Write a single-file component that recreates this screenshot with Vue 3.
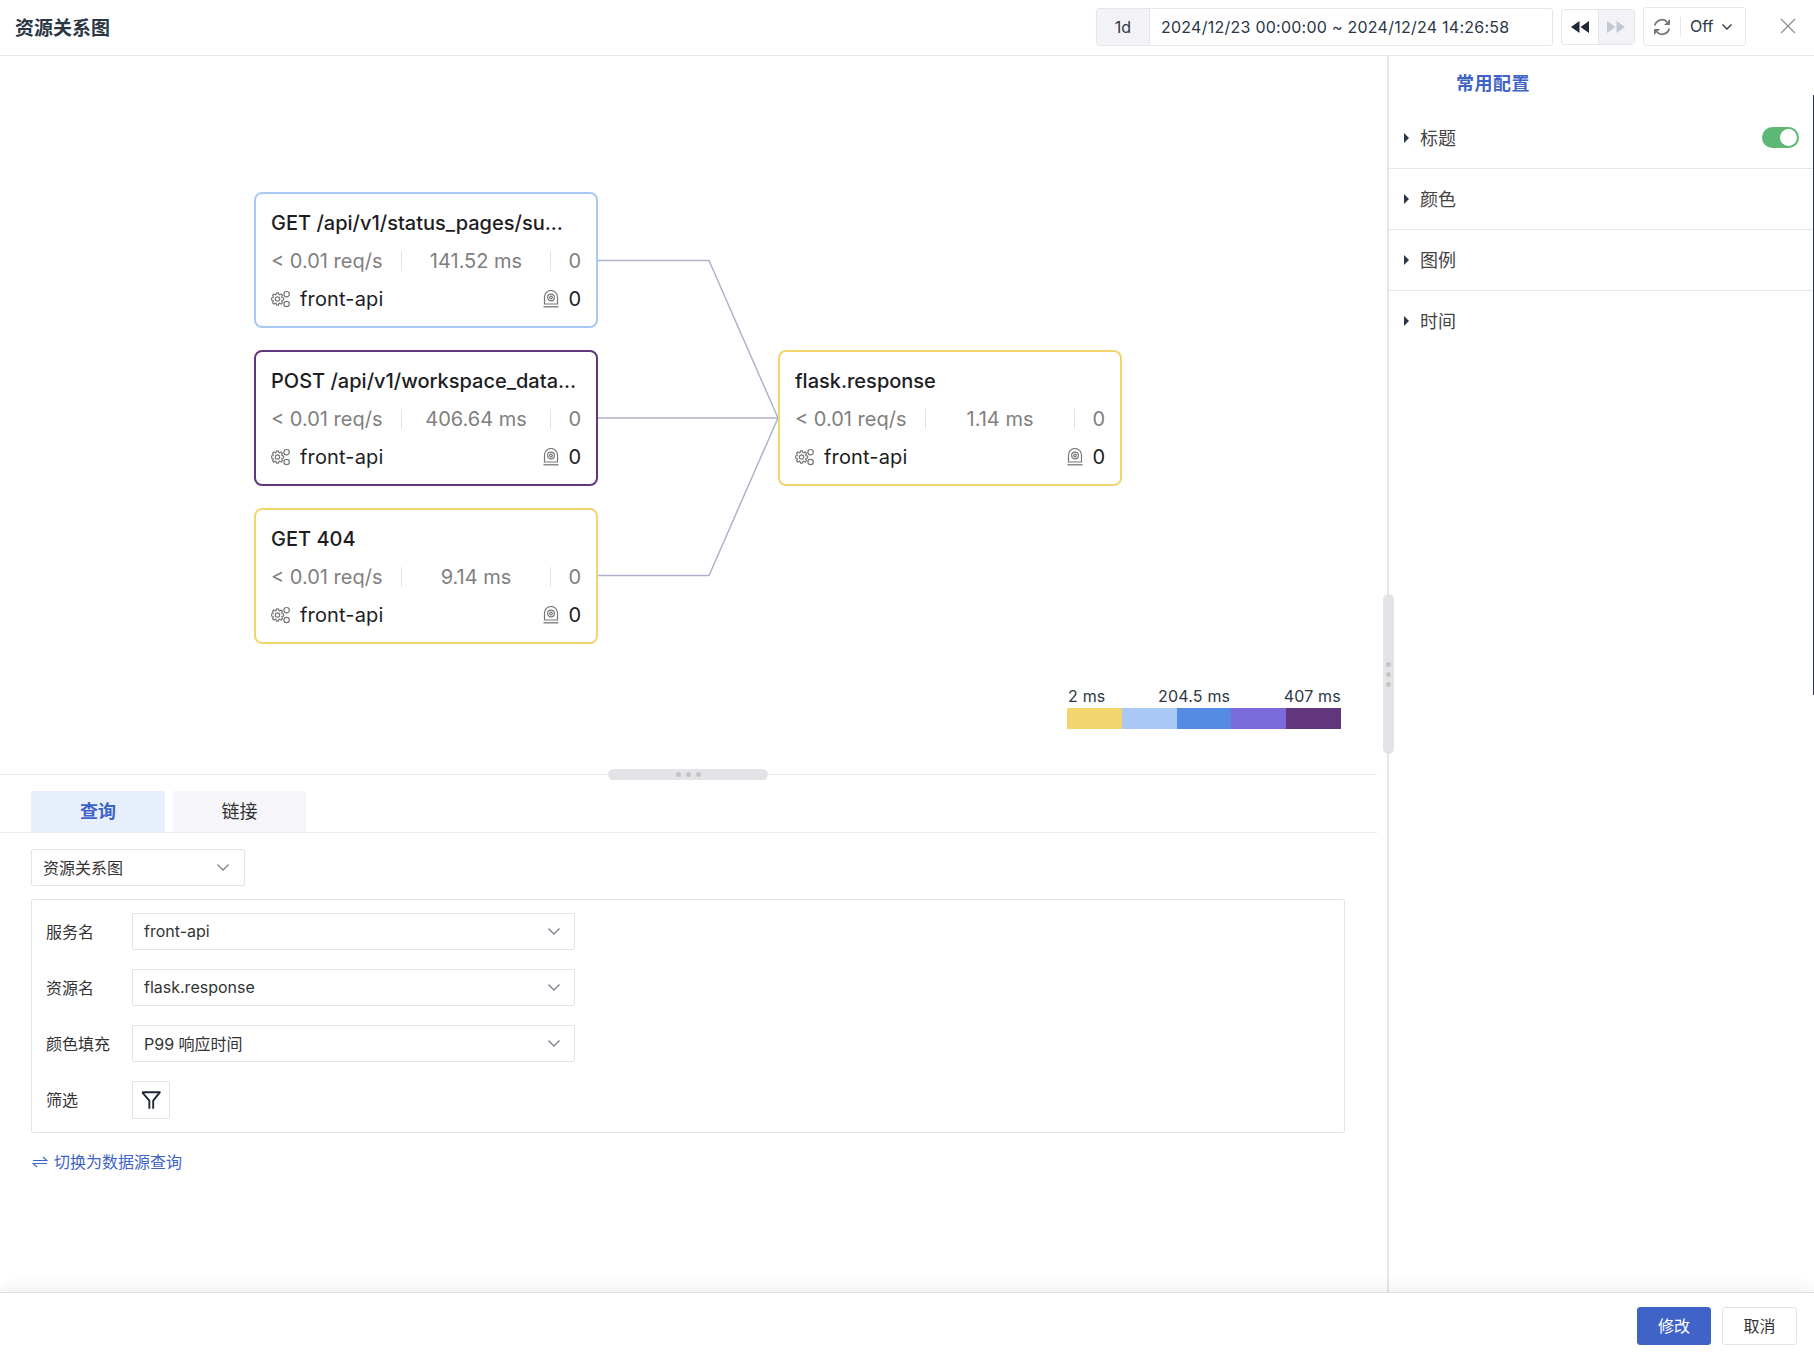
<template>
  <div class="page">
    <header class="header">
      <div class="title">资源关系图</div>
      <div class="date-box">
        <span class="date-range">1d</span>
        <span class="date-text">2024/12/23 00:00:00 ~ 2024/12/24 14:26:58</span>
      </div>
      <div class="step-box">
        <span class="step">
          <svg width="20" height="14" viewBox="0 0 20 14"><path d="M9.500 1v12L1 7zM19 1v12l-8.500-6z" fill="#1f2937" /></svg>
        </span>
        <span class="step step-off">
          <svg width="20" height="14" viewBox="0 0 20 14"><path d="M1 1v12l8.500-6zM10.500 1v12L19 7z" fill="#c3c7d2" /></svg>
        </span>
      </div>
      <div class="refresh-box">
        <svg class="refresh-icon" width="20" height="20" viewBox="0 0 20 20" fill="none" stroke="#777" stroke-width="1.8">
          <path d="M2.800 8.500A7.300 7.300 0 0 1 15 4.800" />
          <path d="M17.200 11.500A7.300 7.300 0 0 1 5 15.200" />
          <path d="M18 2v6h-6zM2 18v-6h6z" fill="#777" stroke="none" />
        </svg>
        <span class="refresh-off">Off</span>
        <svg width="12" height="8" viewBox="0 0 12 8" fill="none" stroke="#2b3646" stroke-width="1.400"><path d="M1.500 1.500 6 6l4.500-4.500" /></svg>
      </div>
      <svg class="close" width="16" height="16" viewBox="0 0 16 16" stroke="#8a8a8a" stroke-width="1.100"><path d="M1 1l14 14M15 1 1 15" /></svg>
    </header>

    <div class="body">
      <div class="left">
        <div class="canvas">
          <svg class="edges" width="1377" height="718" fill="none" stroke="#aeb2cc" stroke-width="1.500">
            <path d="M597 204.500H709L778 362" />
            <path d="M597 362H778" />
            <path d="M597 519.500H709L778 362" />
          </svg>
          <div
            v-for="node in nodes"
            :key="node.title"
            class="node"
            :style="{ left: node.x + 'px', top: node.y + 'px', borderColor: node.color }"
          >
            <div class="node-title">{{ node.title }}</div>
            <div class="node-stats">
              <span class="stat">&lt; 0.01 req/s</span>
              <span class="stat stat-mid">{{ node.latency }}</span>
              <span class="stat stat-end">0</span>
            </div>
            <div class="node-foot">
              <svg width="19" height="18" viewBox="0 0 19 18" fill="none" stroke="#777" stroke-width="1.200">
                <path :d="gearPath" stroke-linejoin="round" />
                <circle cx="6.500" cy="9" r="2.200" />
                <circle cx="15.600" cy="4.200" r="2.700" />
                <circle cx="15.600" cy="14" r="2.700" />
              </svg>
              <span class="foot-name">front-api</span>
              <svg class="foot-cam" width="16" height="18" viewBox="0 0 16 18" fill="none" stroke="#777" stroke-width="1.200">
                <path d="M1.500 14V7a6.500 6.500 0 0 1 13 0v7z" />
                <circle cx="8" cy="7.500" r="3.400" />
                <circle cx="8" cy="7.500" r="1.300" />
                <path d="M.5 16.800h15" stroke-width="1.300" />
              </svg>
              <span class="foot-count">0</span>
            </div>
          </div>
          <div class="legend">
            <div class="legend-labels">
              <span>2 ms</span>
              <span class="legend-mid">204.5 ms</span>
              <span>407 ms</span>
            </div>
            <div class="legend-bar">
              <span v-for="c in legendColors" :key="c" class="legend-seg" :style="{ background: c }"></span>
            </div>
          </div>
          <div class="h-handle">
            <i></i><i></i><i></i>
          </div>
        </div>

        <div class="tabs">
          <span class="tab tab-on">查询</span>
          <span class="tab">链接</span>
        </div>
        <div class="query">
          <div class="select select-kind">
            <span>资源关系图</span>
            <svg class="chev" width="14" height="9" viewBox="0 0 14 9" fill="none" stroke="#7b8190" stroke-width="1.300"><path d="M1.500 1.500 7 7l5.500-5.500" /></svg>
          </div>
          <div class="form">
            <div v-for="row in formRows" :key="row.label" class="form-row">
              <label class="form-label">{{ row.label }}</label>
              <div class="select select-field">
                <span>{{ row.value }}</span>
                <svg class="chev" width="14" height="9" viewBox="0 0 14 9" fill="none" stroke="#7b8190" stroke-width="1.300"><path d="M1.500 1.500 7 7l5.500-5.500" /></svg>
              </div>
            </div>
            <div class="form-row">
              <label class="form-label">筛选</label>
              <div class="filter-btn">
                <svg width="22" height="22" viewBox="0 0 20 20" fill="none" stroke="#1f2733" stroke-width="1.700" stroke-linejoin="round"><path d="M2 3h16l-6 7.500V18M8.500 18v-7.500L2 3" /></svg>
              </div>
            </div>
          </div>
          <div class="switch-link">
            <svg width="16" height="12" viewBox="0 0 16 12" fill="none" stroke="#3f63c7" stroke-width="1.100"><path d="M1 4.500h14L11 1M15 7.500H1L5 11" /></svg>
            <span>切换为数据源查询</span>
          </div>
        </div>
      </div>

      <aside class="right">
        <div class="v-handle">
          <i></i><i></i><i></i>
        </div>
        <div class="right-tab">常用配置</div>
        <div v-for="(item, i) in panels" :key="item" class="panel-row">
          <span class="arrow"></span>
          <span class="panel-name">{{ item }}</span>
          <span v-if="i === 0" class="switch"><b></b></span>
        </div>
      </aside>
    </div>

    <footer class="footer">
      <button class="btn btn-primary">修改</button>
      <button class="btn">取消</button>
    </footer>
    <div class="edge-strip"></div>
  </div>
</template>

<script setup>
const nodes = [
  { title: 'GET /api/v1/status_pages/su...', latency: '141.52 ms', x: 254, y: 136, color: '#a9c8f6' },
  { title: 'POST /api/v1/workspace_data...', latency: '406.64 ms', x: 254, y: 294, color: '#62367c' },
  { title: 'GET 404', latency: '9.14 ms', x: 254, y: 452, color: '#f2d66d' },
  { title: 'flask.response', latency: '1.14 ms', x: 778, y: 294, color: '#f2d66d' }
]

const legendColors = ['#f2d66d', '#a9c8f6', '#558ce2', '#7c6cdb', '#62367c']

const formRows = [
  { label: '服务名', value: 'front-api' },
  { label: '资源名', value: 'flask.response' },
  { label: '颜色填充', value: 'P99 响应时间' }
]

const panels = ['标题', '颜色', '图例', '时间']

// 8 tooth gear for the service icon
const gearPath = (() => {
  const cx = 6.5
  const cy = 9
  const pts = []
  for (let i = 0; i < 8; i++) {
    const a = (i * Math.PI) / 4
    for (const [off, r] of [[-0.3, 4.7], [-0.16, 6.2], [0.16, 6.2], [0.3, 4.7]]) {
      pts.push((cx + r * Math.cos(a + off)).toFixed(2) + ' ' + (cy + r * Math.sin(a + off)).toFixed(2))
    }
  }
  return 'M' + pts.join('L') + 'Z'
})()
</script>

<style>
html,
body {
  margin: 0;
  background: #fff;
}
</style>

<style scoped>
.page {
  position: relative;
  width: 1814px;
  height: 1358px;
  display: flex;
  flex-direction: column;
  overflow: hidden;
  background: #fff;
  color: #2b3646;
  font-family: Inter, "Noto Sans CJK SC", sans-serif;
  font-size: 16px;
}

.header {
  height: 55px;
  flex: none;
  display: flex;
  align-items: center;
  padding: 0 18px 0 15px;
  border-bottom: 1px solid #e5e6ea;
}
.title {
  font-size: 19px;
  font-weight: 600;
  margin-right: auto;
  margin-top: -3px;
}
.date-box {
  width: 457px;
  height: 38px;
  box-sizing: border-box;
  display: flex;
  align-items: center;
  border: 1px solid #e5e6ea;
  border-radius: 3px;
  margin-top: -2px;
}
.date-range {
  width: 53px;
  height: 100%;
  background: #f3f3f7;
  border-right: 1px solid #e5e6ea;
  display: flex;
  align-items: center;
  justify-content: center;
  box-sizing: border-box;
}
.date-text {
  margin-left: 11px;
  white-space: nowrap;
  letter-spacing: 0.25px;
}
.step-box {
  width: 74px;
  height: 36px;
  box-sizing: border-box;
  margin-left: 8px;
  margin-top: -1px;
  display: flex;
  border: 1px solid #e5e6ea;
  border-radius: 3px;
  overflow: hidden;
}
.step {
  flex: 1;
  display: flex;
  align-items: center;
  justify-content: center;
}
.step-off {
  background: #f3f3f7;
  border-left: 1px solid #e5e6ea;
}
.refresh-box {
  width: 103px;
  height: 39px;
  box-sizing: border-box;
  margin-left: 8px;
  margin-top: -2px;
  display: flex;
  align-items: center;
  padding-left: 8px;
  border: 1px solid #e5e6ea;
  border-radius: 3px;
}
.refresh-icon {
  padding-right: 8px;
  border-right: 1px solid #e5e6ea;
}
.refresh-off {
  margin: 0 8px 2px 9px;
}
.close {
  margin-left: 34px;
  margin-top: -3px;
}

.body {
  flex: 1;
  min-height: 0;
  display: flex;
}
.left {
  width: 1387px;
  flex: none;
  box-sizing: border-box;
  padding-right: 10px;
}
.canvas {
  position: relative;
  height: 718px;
  border-bottom: 1px solid #e8e9ed;
}
.edges {
  position: absolute;
  left: 0;
  top: 0;
}
.node {
  position: absolute;
  width: 344px;
  height: 136px;
  box-sizing: border-box;
  padding: 17px 15px 0;
  background: #fff;
  border: 2px solid;
  border-radius: 8px;
}
.node-title {
  font-size: 20px;
  line-height: 24px;
  font-weight: 500;
  color: #1d1d1f;
  white-space: nowrap;
}
.node-stats {
  display: grid;
  grid-template-columns: 130px 149px 31px;
  margin-top: 16px;
  font-size: 20px;
  line-height: 20px;
  color: #808080;
}
.stat {
  white-space: nowrap;
}
.stat-mid {
  text-align: center;
  border-left: 1px solid #e3e3e3;
}
.stat-end {
  text-align: right;
  border-left: 1px solid #e3e3e3;
}
.node-foot {
  display: flex;
  align-items: center;
  margin-top: 18px;
  height: 20px;
  font-size: 20px;
  color: #1d1d1f;
}
.foot-name {
  margin-left: 10px;
  letter-spacing: 0.15px;
}
.foot-cam {
  margin-left: auto;
}
.foot-count {
  margin-left: 9px;
}
.legend {
  position: absolute;
  left: 1067px;
  top: 630px;
  width: 274px;
}
.legend-labels {
  display: flex;
  justify-content: space-between;
  line-height: 20px;
  font-size: 16px;
  letter-spacing: 0.2px;
  color: #2e3742;
}
.legend-labels span:first-child {
  margin-left: 1px;
}
.legend-mid {
  margin-left: -1px;
}
.legend-bar {
  display: flex;
  height: 21px;
  margin-top: 2px;
}
.legend-seg {
  flex: 1;
}
.h-handle {
  position: absolute;
  left: 608px;
  top: 713px;
  width: 160px;
  height: 11px;
  background: #e3e4e8;
  border-radius: 6px;
  display: flex;
  align-items: center;
  justify-content: center;
  gap: 5px;
}
.h-handle i,
.v-handle i {
  width: 5px;
  height: 5px;
  border-radius: 50%;
  background: #c4c4c4;
}

.tabs {
  display: flex;
  gap: 8px;
  padding: 16px 0 0 31px;
  height: 41px;
  border-bottom: 1px solid #e8e9ed;
}
.tab {
  width: 133px;
  display: flex;
  align-items: center;
  justify-content: center;
  box-sizing: border-box;
  padding-bottom: 4px;
  background: #f5f5fa;
  font-size: 18px;
  color: #333;
}
.tab-on {
  width: 134px;
  background: #e8effc;
  color: #3f63c7;
  font-weight: 600;
}
.query {
  padding: 16px 0 0 31px;
}
.select {
  display: flex;
  align-items: center;
  justify-content: space-between;
  box-sizing: border-box;
  border: 1px solid #e2e3e7;
  border-radius: 2px;
  background: #fff;
  color: #333;
}
.select span {
  padding-bottom: 2px;
}
.select-kind {
  width: 214px;
  height: 37px;
  padding: 0 14px 0 11px;
}
.select-field {
  width: 443px;
  height: 37px;
  padding: 0 13px 0 11px;
}
.form {
  width: 1314px;
  height: 234px;
  box-sizing: border-box;
  margin-top: 13px;
  padding: 13px 0 0 14px;
  border: 1px solid #e2e3e7;
  border-radius: 2px;
  display: flex;
  flex-direction: column;
  gap: 19px;
}
.form-row {
  display: flex;
  align-items: center;
}
.form-label {
  width: 86px;
  flex: none;
  padding-bottom: 2px;
  color: #333;
}
.filter-btn {
  width: 38px;
  height: 38px;
  box-sizing: border-box;
  border: 1px solid #e2e3e7;
  border-radius: 2px;
  display: flex;
  align-items: center;
  justify-content: center;
}
.switch-link {
  display: flex;
  align-items: center;
  gap: 6px;
  margin: 17px 0 0 1px;
  color: #3f63c7;
  line-height: 24px;
}

.right {
  position: relative;
  flex: 1;
  border-left: 2px solid #e5e6ea;
}
.right-tab {
  height: 52px;
  padding-left: 67px;
  line-height: 56px;
  font-size: 18px;
  font-weight: 600;
  letter-spacing: 0.5px;
  color: #3f63c7;
}
.panel-row {
  height: 60px;
  box-sizing: content-box;
  display: flex;
  align-items: center;
  position: relative;
  padding: 0 15px 0 31px;
  border-bottom: 1px solid #e5e6ea;
  font-size: 18px;
  color: #444;
}
.panel-name {
  margin-top: -2px;
}
.panel-row:last-of-type {
  border-bottom: 0;
}
.arrow {
  position: absolute;
  left: 15px;
  top: 25px;
  width: 0;
  height: 0;
  border-left: 5px solid #2b3646;
  border-top: 5px solid transparent;
  border-bottom: 5px solid transparent;
}
.switch {
  margin-left: auto;
  margin-top: -2px;
  width: 37px;
  height: 21px;
  border-radius: 11px;
  background: #5cb874;
  display: flex;
  align-items: center;
  justify-content: flex-end;
  padding-right: 2px;
  box-sizing: border-box;
}
.switch b {
  width: 17px;
  height: 17px;
  border-radius: 50%;
  background: #fff;
}
.v-handle {
  position: absolute;
  left: -6px;
  top: 538px;
  width: 11px;
  height: 160px;
  background: #e3e4e8;
  border-radius: 6px;
  display: flex;
  flex-direction: column;
  align-items: center;
  justify-content: center;
  gap: 5px;
}

.footer {
  height: 66px;
  flex: none;
  box-sizing: border-box;
  position: relative;
  display: flex;
  align-items: center;
  justify-content: flex-end;
  gap: 11px;
  padding: 0 17px 0 0;
  background: #fff;
  border-top: 1px solid #ddd;
  box-shadow: 0 -4px 14px rgba(0, 0, 0, 0.07);
}
.btn {
  width: 75px;
  height: 38px;
  box-sizing: border-box;
  border: 1px solid #e2e3e7;
  border-radius: 3px;
  background: #fff;
  color: #333;
  font-family: inherit;
  font-size: 16px;
  padding: 0 0 2px;
}
.btn-primary {
  width: 74px;
  background: #3f63c7;
  border-color: #3f63c7;
  color: #fff;
}
.edge-strip {
  position: absolute;
  right: 0;
  top: 95px;
  width: 1px;
  height: 600px;
  background: #2a3450;
}
</style>
